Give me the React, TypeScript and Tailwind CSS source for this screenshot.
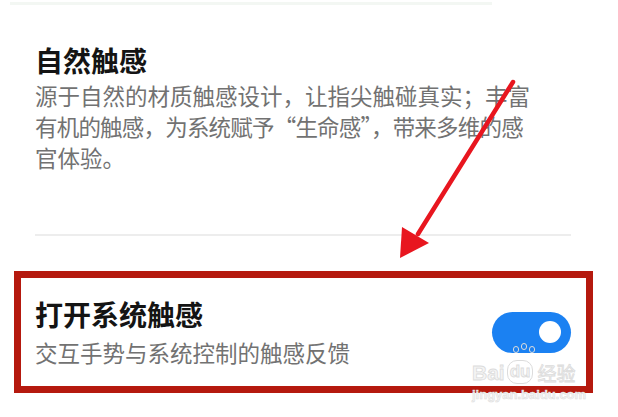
import React from "react";

const cjk = { fontFamily: '"Noto Sans CJK SC", "Noto Sans", sans-serif' };

function Toggle({ on }: { on: boolean }) {
  return (
    <div
      className={
        "w-[79px] h-[41px] rounded-full flex items-center px-[10px] " +
        (on ? "bg-[#1b81f2] justify-end" : "bg-[#d9d9d9] justify-start")
      }
    >
      <div className="w-[22px] h-[22px] rounded-full bg-white" />
    </div>
  );
}

export default function App() {
  return (
    <div
      className="relative w-[618px] h-[417px] bg-white overflow-hidden"
      style={cjk}
    >
      {/* faint edge of the previous card */}
      <div className="mt-[2px] ml-[10px] w-[482px] h-[3px] bg-[#f3f7f3]" />

      {/* 自然触感 */}
      <div className="pl-[35px] pt-[38px]">
        <div className="text-[28px] leading-[34px] font-bold text-[#141414]">
          自然触感
        </div>
        <div className="mt-[3px] text-[22.5px] leading-[31px] text-[#727272]">
          源于自然的材质触感设计，让指尖触碰真实；丰富
          <br />
          <span className="tracking-[-0.8px]">
            有机的触感，为系统赋予“生命感”，带来多维的感
          </span>
          <br />
          官体验。
        </div>
      </div>

      <div className="mt-[61px] ml-[35px] w-[536px] h-[2px] bg-[#ededed]" />

      {/* 打开系统触感 */}
      <div className="mt-[35px] ml-[14px] w-[579px] h-[122px] border-[7px] border-[#b5190e] flex items-center justify-between pl-[14px] pr-[15px]">
        <div className="flex flex-col">
          <div className="text-[28px] leading-[34px] font-bold text-[#141414]">
            打开系统触感
          </div>
          <div className="mt-[6px] text-[22.5px] leading-[31px] text-[#727272]">
            交互手势与系统控制的触感反馈
          </div>
        </div>
        <Toggle on />
      </div>

      {/* annotation arrow */}
      <svg
        className="absolute left-0 top-0"
        width="618"
        height="417"
        viewBox="0 0 618 417"
      >
        <line
          x1="513"
          y1="82"
          x2="418"
          y2="234"
          stroke="#e8161f"
          strokeWidth="4.5"
          strokeLinecap="round"
        />
        <polygon points="400,258 402,227 429,243" fill="#e8161f" />
      </svg>

      {/* watermark */}
      <div
        className="absolute left-[472px] top-[348px] flex flex-col items-start text-[#f4f4f4]"
        style={{ fontFamily: '"Liberation Sans", "Noto Sans CJK SC", sans-serif' }}
      >
        <div className="flex items-end h-[36px] text-[21px] leading-[22px] font-bold [-webkit-text-stroke:0.8px_#dcdcdc]">
          <span>Bai</span>
          <span className="relative mx-[2px] px-[2px] rounded-[10px] border border-[#dcdcdc] text-[17px]">
            du
            <span className="absolute -top-[15px] left-[5px] flex gap-[2px]">
              <span className="w-[6px] h-[7px] rounded-full border border-[#dcdcdc]" />
              <span className="w-[6px] h-[7px] rounded-full border border-[#dcdcdc] -mt-[3px]" />
              <span className="w-[6px] h-[7px] rounded-full border border-[#dcdcdc]" />
            </span>
          </span>
          <span className="ml-[2px] text-[19px] font-normal" style={cjk}>
            经验
          </span>
        </div>
        <div className="text-[13px] leading-[15px] mt-[3px] font-bold [-webkit-text-stroke:0.5px_#dcdcdc]">
          jingyan.baidu.com
        </div>
      </div>
    </div>
  );
}
